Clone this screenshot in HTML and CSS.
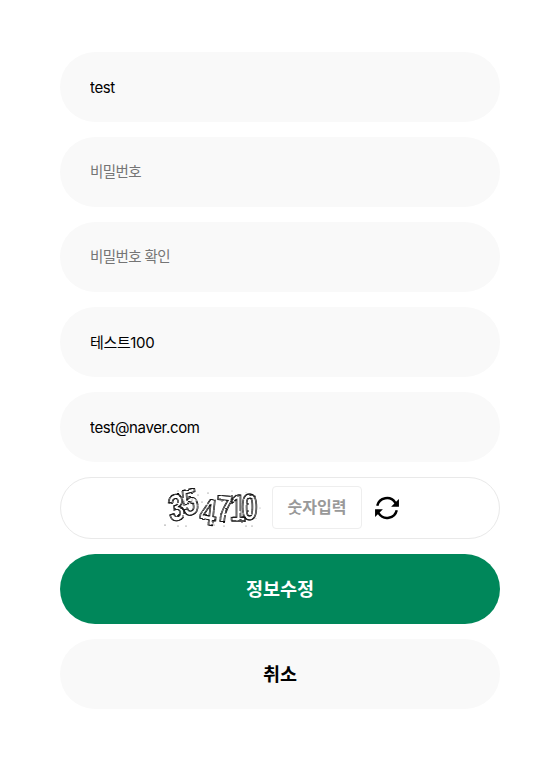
FILE: index.html
```html
<!DOCTYPE html>
<html lang="ko">
<head>
<meta charset="utf-8">
<title>정보수정</title>
<link rel="stylesheet" href="styles.css">
</head>
<body>
<form class="form">
  <input class="field" type="text" value="test">
  <input class="field ko" type="password" placeholder="비밀번호">
  <input class="field ko" type="password" placeholder="비밀번호 확인">
  <input class="field ko" type="text" value="테스트100">
  <input class="field" type="text" value="test@naver.com">
  <div class="captcha">
    <svg class="captcha-img" viewBox="0 0 100 40" width="100" height="40" role="img" aria-label="354710">
      <defs>
        <filter id="rough" x="-5%" y="-5%" width="110%" height="110%">
          <feTurbulence type="fractalNoise" baseFrequency="0.3" numOctaves="2" seed="4" result="n"/>
          <feDisplacementMap in="SourceGraphic" in2="n" scale="2.4" result="d"/>
          <feOffset in="d" dx="1.6" dy="0" result="o"/>
          <feMerge>
            <feMergeNode in="o"/>
            <feMergeNode in="d"/>
          </feMerge>
        </filter>
      </defs>
      <text class="digits" filter="url(#rough)" transform="scale(.85 1.1)" x="9 25 43 63 79 93" y="31 26 32 30 30 29" rotate="-10 -10 8 3 0 0">354710</text>
      <g class="noise">
        <circle cx="16" cy="3" r=".5"/><circle cx="36" cy="7" r=".5"/><circle cx="40" cy="14" r=".5"/><circle cx="3" cy="37" r=".6"/><circle cx="24" cy="38" r=".5"/><circle cx="46" cy="5" r=".5"/><circle cx="62" cy="38" r=".5"/><circle cx="90" cy="38" r=".5"/><circle cx="98" cy="20" r=".4"/><circle cx="52" cy="37" r=".5"/><circle cx="30" cy="12" r=".5"/><circle cx="84" cy="38" r=".5"/><circle cx="16" cy="38" r=".5"/><circle cx="44" cy="20" r=".5"/><circle cx="70" cy="3" r=".4"/><circle cx="8" cy="12" r=".4"/>
      </g>
    </svg>
    <input class="captcha-input" type="text" placeholder="숫자입력">
    <button class="refresh" type="button" aria-label="새로고침">
      <svg viewBox="0 0 24 24" width="26" height="26" fill="none" stroke="#000" stroke-width="2.3">
        <path d="M3 10A9.2 9.2 0 0 1 19.6 7L21.5 9.6"/>
        <path d="M21 14A9.2 9.2 0 0 1 4.4 17L2.5 14.4"/>
        <path class="tip" d="M23 3.6V10.8H15.8Z"/>
        <path class="tip" d="M1 20.4V13.2H8.2Z"/>
      </svg>
    </button>
  </div>
  <button class="btn primary" type="button">정보수정</button>
  <button class="btn secondary" type="button">취소</button>
</form>
</body>
</html>
```
FILE: styles.css
```css
* { box-sizing: border-box; }
html, body { margin: 0; background: #fff; }
body {
  font-family: Inter, "Noto Sans CJK KR", sans-serif;
  color: #000;
}
.form {
  display: flex;
  flex-direction: column;
  gap: 15px;
  width: 440px;
  margin: 0 0 0 60px;
  padding: 52px 0;
}
.field {
  display: block;
  width: 100%;
  height: 70px;
  border: 0;
  outline: 0;
  border-radius: 35px;
  background: #f9f9f9;
  padding: 0 30px;
  font: 400 15px Inter, "Noto Sans CJK KR", sans-serif;
  letter-spacing: -0.35px;
  color: #000;
}
.ko { padding-bottom: 2px; }
.field::placeholder { color: #757575; opacity: 1; font-size: 14.5px; letter-spacing: -0.6px; }
.captcha {
  display: flex;
  align-items: center;
  justify-content: center;
  gap: 10px;
  height: 62px;
  border: 1px solid #e9e9e9;
  border-radius: 31px;
  background: #fff;
}
.captcha-img { display: block; flex: none; }
.digits {
  font: 700 34px "Liberation Sans", sans-serif;
  fill: none;
  stroke: #111;
  stroke-width: .8;
}
.noise circle { fill: #444; }
.captcha-input {
  width: 90px;
  height: 43px;
  margin-top: -1px;
  border: 1px solid #eee;
  border-radius: 4px;
  background: #fff;
  outline: 0;
  text-align: center;
  padding: 0 0 2px;
  font: 700 16px Inter, "Noto Sans CJK KR", sans-serif;
}
.captcha-input::placeholder { color: #999; opacity: 1; }
.refresh {
  display: flex;
  padding: 0;
  margin: -1px -2px 0 2px;
  border: 0;
  background: none;
}
.tip { fill: #000; stroke: none; }
.btn {
  display: block;
  width: 100%;
  height: 70px;
  border: 0;
  border-radius: 35px;
  padding: 0 0 2px;
  font: 700 18.5px Inter, "Noto Sans CJK KR", sans-serif;
  text-align: center;
}
.primary { background: #00875a; color: #fff; }
.secondary { background: #f9f9f9; color: #000; }
```
